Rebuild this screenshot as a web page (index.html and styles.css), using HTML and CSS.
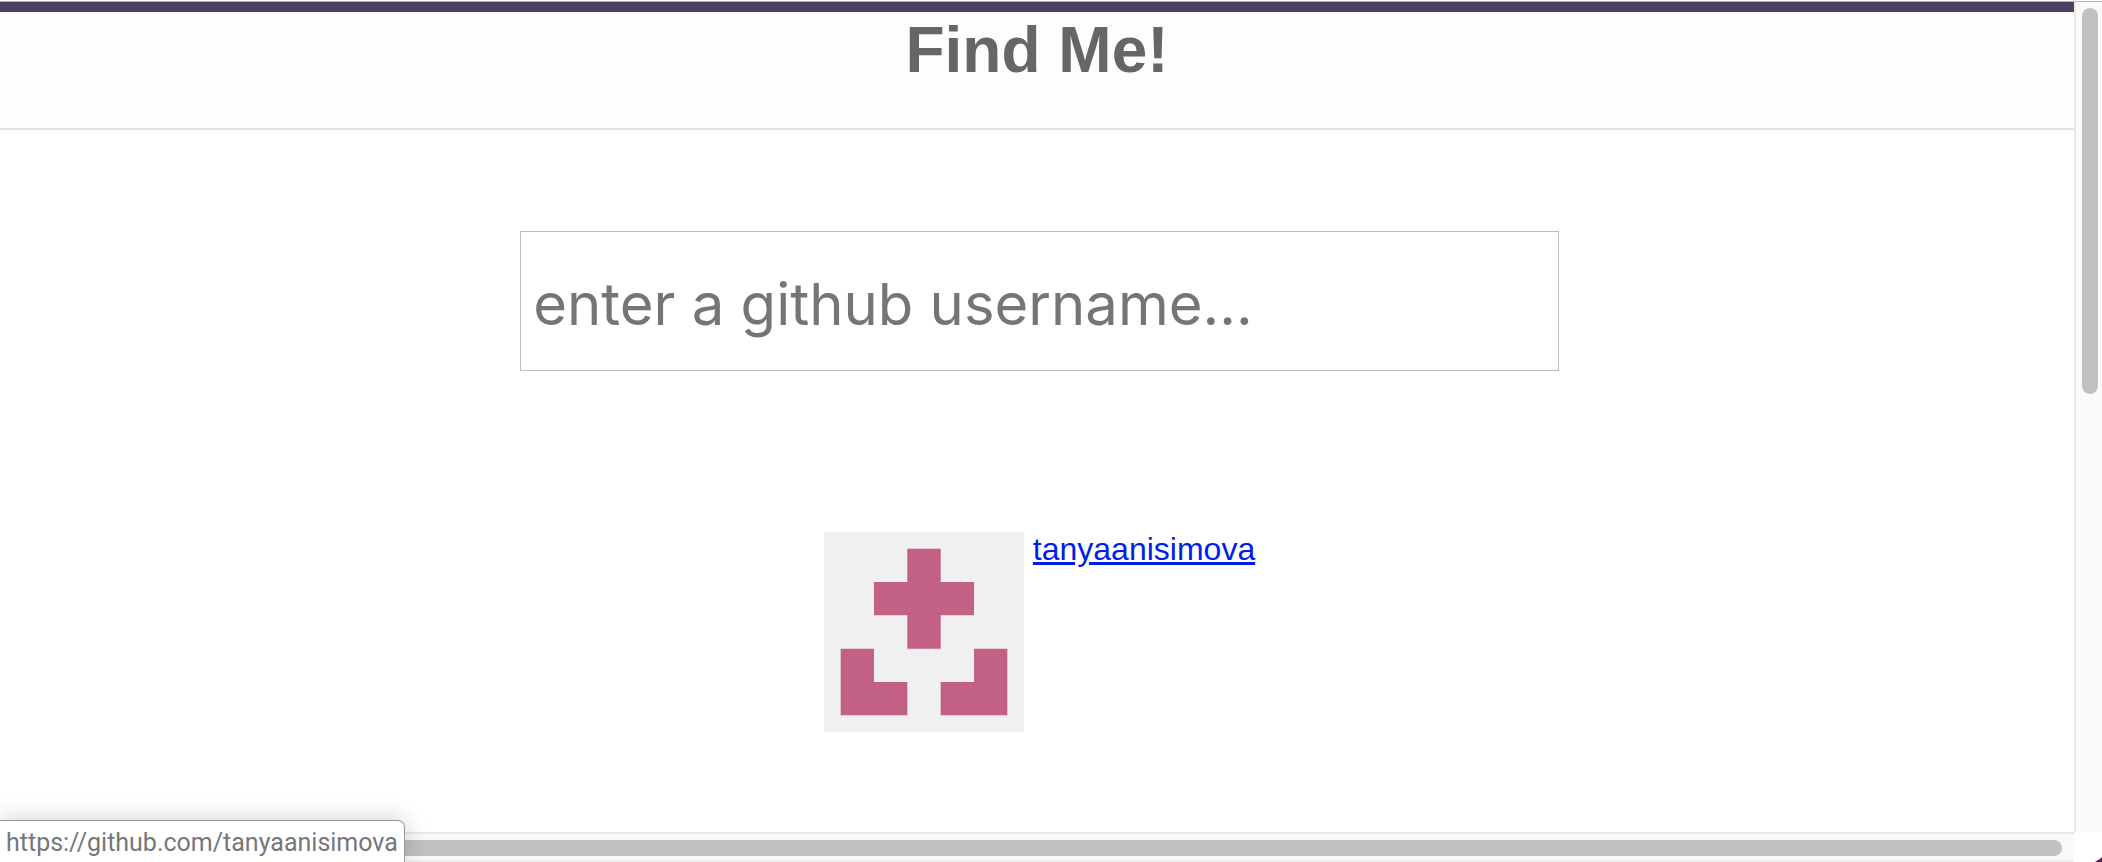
FILE: index.html
```
<!DOCTYPE html>
<html lang="en">
<head>
<meta charset="utf-8">
<title>Find Me!</title>
<link rel="stylesheet" href="styles.css">
</head>
<body>
<div class="window">
  <div class="page">
    <header class="header">
      <h1 class="title">Find Me!</h1>
    </header>
    <main class="main">
      <input class="search" type="text" aria-label="GitHub username" placeholder="enter a github username...">
      <section class="profile">
        <svg class="avatar" viewBox="0 0 420 420" role="img" aria-label="Avatar">
          <path class="avatar-shape" d="M175 35h70v70h70v70h-70v70h-70v-70h-70v-70h70zM35 245h70v70h70v70H35zM315 245h70v140H245v-70h70z"/>
        </svg>
        <a class="profile-link" href="https://github.com/tanyaanisimova">tanyaanisimova</a>
      </section>
    </main>
  </div>
  <div class="track-y"><div class="thumb-y"></div></div>
  <div class="track-x"><div class="thumb-x"></div></div>
  <div class="corner"><svg class="corner-mark" viewBox="0 0 7 5" aria-hidden="true"><path d="M0 5L3 3L5 2L7 0V5z"/></svg></div>
  <div class="status">https://github.com/tanyaanisimova</div>
</div>
</body>
</html>
```
FILE: styles.css
```
* {
  box-sizing: border-box;
}

body {
  margin: 0;
  background: #fff;
  font-family: "Liberation Sans", Arial, sans-serif;
}

.window {
  position: relative;
  display: grid;
  grid-template-columns: 1fr 28px;
  grid-template-rows: 1fr 30px;
  height: 100vh;
  padding-top: 1px;
  overflow: hidden;
}

.page,
.track-y {
  border-top: 1px solid #b4b6b8;
}

.page {
  min-height: 0;
  overflow: hidden;
}

.header {
  border-top: 10px solid #4d4062;
  border-bottom: 2px solid #e6e1de;
  background: #fdfdfd;
  padding: 1px 0 41px;
  text-align: center;
}

.title {
  margin: 0;
  color: #666;
  font-size: 64px;
  line-height: 74px;
}

.main {
  display: flex;
  flex-direction: column;
  align-items: center;
  gap: 161px;
  padding: 101px 0 0 5px;
}

.search {
  width: calc(50% + 4px);
  min-width: 320px;
  height: 140px;
  padding: 6px 12px 0;
  border: 1px solid #bdbdbd;
  border-radius: 0;
  background: #fff;
  color: #333;
  font: 58px Inter, sans-serif;
}

.search::placeholder {
  color: #757575;
  opacity: 1;
}

.profile {
  display: flex;
  align-items: flex-start;
  gap: 9px;
}

.avatar {
  width: 200px;
  height: 200px;
  background: #f0f0f0;
}

.avatar-shape {
  fill: #c26085;
}

.profile-link {
  color: #001ee8;
  font-size: 32px;
  line-height: 34px;
}

.track-y {
  padding: 6px 4px 0 6px;
  border-left: 2px solid #e8e8e8;
  background: #fafafa;
}

.thumb-y {
  height: 386px;
  border-radius: 8px;
  background: #c1c1c1;
}

.track-x {
  padding: 6px 12px 0 0;
  border-top: 2px solid #e8e8e8;
  border-bottom: 2px solid #ededed;
  background: #fafafa;
}

.thumb-x {
  height: 16px;
  border-radius: 8px;
  background: #c1c1c1;
}

.corner {
  display: flex;
  align-items: flex-end;
  justify-content: flex-end;
}

.corner-mark {
  width: 7px;
  height: 5px;
  fill: #5a1a4c;
}

.status {
  position: absolute;
  left: 0;
  bottom: 0;
  padding: 7px 6px 5px;
  border-top: 1px solid #999;
  border-right: 1px solid #999;
  border-top-right-radius: 7px;
  background: #fff;
  box-shadow: 0 0 24px rgba(0, 0, 0, 0.2);
  color: #75777b;
  font: 25px/29px Roboto, sans-serif;
}
```
